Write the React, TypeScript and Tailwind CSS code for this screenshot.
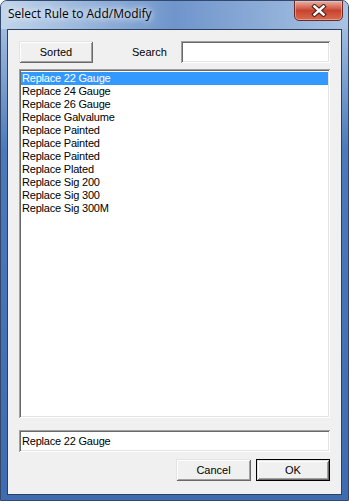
const rules = [
  "Replace 22 Gauge",
  "Replace 24 Gauge",
  "Replace 26 Gauge",
  "Replace Galvalume",
  "Replace Painted",
  "Replace Painted",
  "Replace Painted",
  "Replace Plated",
  "Replace Sig 200",
  "Replace Sig 300",
  "Replace Sig 300M",
];

const raised =
  "bg-[#f0f0f0] shadow-[inset_1px_1px_#e3e3e3,inset_-1px_-1px_#696969,inset_2px_2px_#ffffff,inset_-2px_-2px_#a0a0a0]";
const sunken =
  "bg-white shadow-[inset_1px_1px_#a0a0a0,inset_-1px_-1px_#ffffff,inset_2px_2px_#696969,inset_-2px_-2px_#e3e3e3]";

const CloseButton = () => (
  <div className="absolute right-[5px] top-[-1px] w-[49px] h-[21px] rounded-b-[5px] border border-[#6b2a22] bg-gradient-to-b from-[#e8b1a4] via-[#c8432f] to-[#d66a4f] flex items-center justify-center shadow-[inset_0_0_0_1px_rgba(255,200,190,0.5)]">
    <svg width="16" height="13" viewBox="0 0 16 13">
      <path d="M3.5 2.5 L12.5 10.5 M12.5 2.5 L3.5 10.5" stroke="#4a1c16" strokeWidth="4.5" strokeLinecap="square" />
      <path d="M3.5 2.5 L12.5 10.5 M12.5 2.5 L3.5 10.5" stroke="#ffffff" strokeWidth="2.5" strokeLinecap="square" />
    </svg>
  </div>
);

export default function App() {
  return (
    <div className="w-[349px] h-[501px] bg-white">
      <div className="relative w-[349px] h-[501px] flex flex-col rounded-t-[7px] border border-[#33486a] bg-gradient-to-b from-[#b4cbe7] via-[#4b79ba] via-30% to-[#3f6cb0] overflow-hidden">
        <div className="h-[28px] shrink-0 bg-gradient-to-r from-[#c1d5eb] via-[#6f95cb] via-50% to-[#a9c3e3] flex items-center pl-[7px]">
          <span className="font-['Open_Sans',sans-serif] text-[12px] text-black [text-shadow:0_0_6px_#ffffff,0_0_10px_#ffffff] pb-[2px]">
            Select Rule to Add/Modify
          </span>
        </div>
        <CloseButton />
        <div className="flex-1 px-[6px] pb-[5px] flex">
          <div className="flex-1 border border-[#2c3f5e] bg-[#f0f0f0] flex flex-col px-[11px] pt-[11px] pb-[12px] font-['Liberation_Sans',Arial,sans-serif] text-[11px] text-black">
            <div className="flex items-center h-[22px]">
              <div className={`${raised} w-[74px] h-[22px] flex items-center justify-center`}>Sorted</div>
              <span className="ml-[39px] w-[49px]">Search</span>
              <div className={`${sunken} flex-1 h-[22px]`} />
            </div>
            <div className={`${sunken} mt-[6px] h-[349px] px-[2px] pt-[3px] flex flex-col tracking-[-0.2px]`}>
              {rules.map((r, i) => (
                <div
                  key={i}
                  className={`h-[13px] leading-[13px] pl-[1px] ${i === 0 ? "bg-[#3399ff] text-white" : ""}`}
                >
                  {r}
                </div>
              ))}
            </div>
            <div className={`${sunken} mt-[12px] h-[22px] flex items-center pl-[3px] tracking-[-0.2px]`}>Replace 22 Gauge</div>
            <div className="mt-[7px] flex justify-end gap-[5px]">
              <div className={`${raised} w-[75px] h-[22px] flex items-center justify-center`}>Cancel</div>
              <div className={`${raised} w-[74px] h-[22px] flex items-center justify-center border border-black`}>OK</div>
            </div>
          </div>
        </div>
      </div>
    </div>
  );
}
